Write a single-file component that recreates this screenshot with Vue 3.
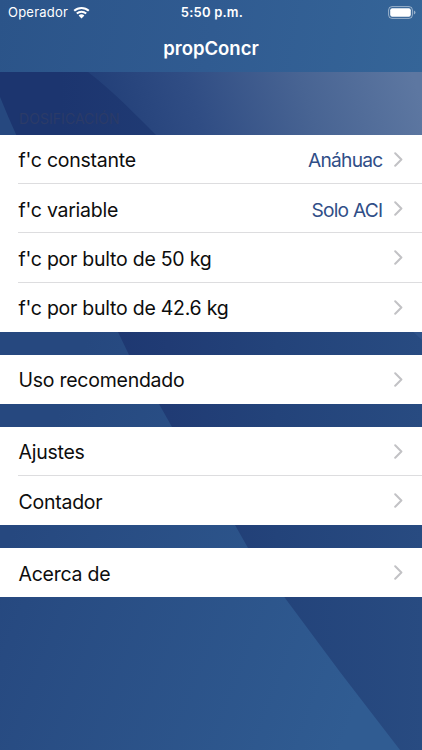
<script setup>
const groups = [
  {
    title: 'DOSIFICACIÓN',
    rows: [
      { label: "f'c constante", value: 'Anáhuac' },
      { label: "f'c variable", value: 'Solo ACI' },
      { label: "f'c por bulto de 50 kg" },
      { label: "f'c por bulto de 42.6 kg" },
    ],
  },
  { rows: [{ label: 'Uso recomendado' }] },
  { rows: [{ label: 'Ajustes' }, { label: 'Contador' }] },
  { rows: [{ label: 'Acerca de' }] },
]
</script>

<template>
  <div class="screen">
    <svg class="backdrop" viewBox="0 0 422 750" preserveAspectRatio="none" aria-hidden="true">
      <defs>
        <linearGradient id="base" gradientUnits="userSpaceOnUse" x1="0" y1="560" x2="360" y2="700">
          <stop offset="0" stop-color="#26487f" />
          <stop offset="1" stop-color="#305c92" />
        </linearGradient>
        <linearGradient id="dark" gradientUnits="userSpaceOnUse" x1="60" y1="0" x2="422" y2="0">
          <stop offset="0" stop-color="#1c356f" />
          <stop offset="0.3" stop-color="#203b74" />
          <stop offset="0.6" stop-color="#23437a" />
          <stop offset="1" stop-color="#284b81" />
        </linearGradient>
        <linearGradient id="light" gradientUnits="userSpaceOnUse" x1="110" y1="145" x2="405" y2="50">
          <stop offset="0" stop-color="#223f78" />
          <stop offset="0.3" stop-color="#304d84" />
          <stop offset="0.65" stop-color="#486493" />
          <stop offset="1" stop-color="#5d77a1" />
        </linearGradient>
        <linearGradient id="bar" gradientUnits="userSpaceOnUse" x1="0" y1="0" x2="422" y2="72">
          <stop offset="0" stop-color="#2b5489" />
          <stop offset="0.5" stop-color="#305b91" />
          <stop offset="1" stop-color="#356598" />
        </linearGradient>
      </defs>
      <rect width="422" height="750" fill="url(#base)" />
      <path d="M0 72V97C32 176 76 256 118 332L129 355L159 404L172 427L235 525L248 548L285 598L340 672L400 750H422V72Z" fill="url(#dark)" />
      <path d="M88 72C112 90 134 113 158 137L200 175H422V72Z" fill="url(#light)" />
      <path d="M411 330L422 340V330Z" fill="#305389" />
      <rect width="422" height="72" fill="url(#bar)" />
    </svg>

    <header class="header">
      <div class="status">
        <div class="carrier">
          <span class="operator">Operador</span>
          <svg class="wifi" viewBox="0 0 17 13" aria-hidden="true">
            <path d="M1.2 4.8C5.2 .9 11.8 .9 15.8 4.8M3.8 7.5C6.5 5 10.5 5 13.2 7.5" fill="none" stroke="#fff" stroke-width="2" />
            <path d="M5.6 9.4Q8.5 7 11.4 9.4L8.5 12.4Z" fill="#fff" />
          </svg>
        </div>
        <span class="time">5:50&nbsp;p.m.</span>
        <svg class="battery" viewBox="0 0 28 13" aria-hidden="true">
          <rect x=".6" y=".6" width="23.8" height="11.8" rx="3.4" fill="none" stroke="#fff" stroke-opacity=".5" />
          <rect x="2.2" y="2.2" width="20.6" height="8.6" rx="2" fill="#fff" />
          <path d="M25.9 4.4Q27.5 5 27.5 6.5T25.9 8.6Z" fill="#fff" fill-opacity=".5" />
        </svg>
      </div>
      <h1 class="title">propConcr</h1>
    </header>

    <main class="list">
      <section v-for="(group, i) in groups" :key="i" class="group">
        <h2 v-if="group.title" class="caption">{{ group.title }}</h2>
        <div class="rows">
          <div v-for="row in group.rows" :key="row.label" class="row">
            <span class="label">{{ row.label }}</span>
            <span v-if="row.value" class="value">{{ row.value }}</span>
            <svg class="chevron" viewBox="0 0 9 15" aria-hidden="true">
              <path d="M1.2 1.3L7.4 7.5L1.2 13.7" fill="none" stroke="#c2c2c5" stroke-width="2" stroke-linecap="round" stroke-linejoin="round" />
            </svg>
          </div>
        </div>
      </section>
    </main>
  </div>
</template>

<style>
body {
  margin: 0;
}
</style>

<style scoped>
.screen {
  position: relative;
  width: 422px;
  height: 750px;
  overflow: hidden;
  font-family: Inter, "Liberation Sans", sans-serif;
}
.backdrop {
  position: absolute;
  inset: 0;
  width: 100%;
  height: 100%;
}
.header {
  position: relative;
  height: 72px;
  color: #fff;
}
.status {
  display: grid;
  grid-template-columns: 1fr auto 1fr;
  align-items: center;
  height: 24px;
  padding: 0 6px 0 8px;
}
.carrier {
  display: flex;
  align-items: center;
  gap: 5px;
}
.operator {
  font-size: 13px;
  letter-spacing: 0.22px;
}
.wifi {
  width: 17px;
  height: 13px;
}
.time {
  font-size: 13px;
  font-weight: 600;
  letter-spacing: 0.2px;
}
.battery {
  justify-self: end;
  width: 28px;
  height: 13px;
}
.title {
  margin: 0;
  height: 48px;
  line-height: 48px;
  text-align: center;
  font-size: 18.5px;
  font-weight: 600;
}
.list {
  position: relative;
  display: flex;
  flex-direction: column;
  gap: 22.8px;
}
.caption {
  box-sizing: border-box;
  height: 62.7px;
  margin: 0;
  padding: 37px 18px 0 19px;
  line-height: 19px;
  font-size: 14px;
  font-weight: 400;
  letter-spacing: 0.05px;
  color: #2b3b68;
}
.rows {
  background: #fff;
}
.row {
  position: relative;
  display: flex;
  align-items: center;
  height: 49.3px;
  padding: 0 19px 0 18.5px;
}
.row + .row::before {
  content: "";
  position: absolute;
  top: -1px;
  left: 18px;
  right: 0;
  height: 1px;
  background: #dddddf;
}
.label,
.value {
  padding-top: 1.8px;
  font-size: 19.5px;
  line-height: 26px;
  letter-spacing: -0.25px;
  white-space: nowrap;
}
.label {
  color: #0d0d0d;
}
.value {
  margin-left: auto;
  font-size: 19.2px;
  letter-spacing: -0.75px;
  color: #304e87;
}
.chevron {
  width: 9px;
  height: 15px;
  margin-left: auto;
}
.value + .chevron {
  margin-left: 11.5px;
}
</style>
